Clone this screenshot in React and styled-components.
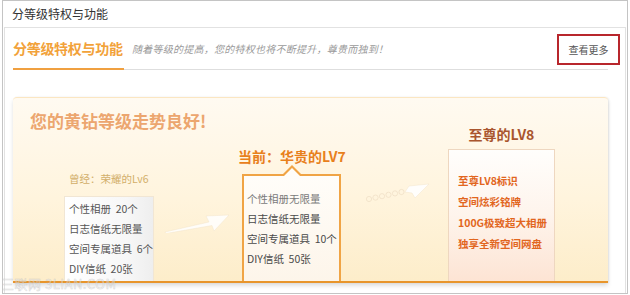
import React from "react";
import styled, { createGlobalStyle } from "styled-components";

const Global = createGlobalStyle`
  html, body { margin: 0; padding: 0; background: #fff; }
  body { font-family: "Noto Sans CJK SC", "Noto Sans", "Liberation Sans", sans-serif; }
  * { box-sizing: border-box; }
`;

const Frame = styled.div`
  position: relative;
  width: 626px;
  height: 294px;
  margin-left: 2px;
  border: 1px solid #c4c4c4;
  display: flex;
  flex-direction: column;
  overflow: hidden;
`;

const Header = styled.div`
  height: 26px;
  line-height: 25px;
  padding-left: 9px;
  font-size: 12px;
  color: #333;
`;

const Inner = styled.div`
  flex: 1;
  margin: 0 1px;
  border: 1px solid #e2e2e2;
  border-bottom: none;
`;

const TitleRow = styled.div`
  display: flex;
  align-items: flex-end;
  margin-left: 8px;
  width: 595px;
  height: 42px;
  border-bottom: 1px solid #dedede;
`;

const Title = styled.div`
  font-size: 14px;
  font-weight: 700;
  line-height: 20px;
  color: #f2a23a;
  padding-bottom: 10px;
  margin-bottom: -1px;
  border-bottom: 2px solid #f0a040;
  letter-spacing: -0.3px;
  width: 111px;
  white-space: nowrap;
`;

const Subtitle = styled.div`
  margin-left: 8px;
  margin-bottom: 13px;
  font-size: 10px;
  line-height: 14px;
  color: #9a9a9a;
  font-style: italic;
  letter-spacing: 0.25px;
  white-space: nowrap;
`;

const MoreButton = styled.a`
  align-self: flex-start;
  margin-top: 6px;
  margin-left: auto;
  margin-right: -12px;
  width: 63px;
  height: 31px;
  border: 2px solid #b8262c;
  display: flex;
  align-items: center;
  justify-content: center;
  font-size: 10px;
  color: #555;
  text-decoration: none;
`;

const Panel = styled.div`
  margin: 27px 0 0 8px;
  width: 595px;
  height: 186px;
  border-top: 1px solid #fbe6c2;
  border-bottom: 2px solid #e8952b;
  border-radius: 4px 4px 0 0;
  background: linear-gradient(180deg, #fffaf1 0%, #fff4dd 55%, #fdedca 100%);
  box-shadow: 1px 0 2px rgba(0, 0, 0, 0.08), 0 3px 4px rgba(0, 0, 0, 0.12);
  display: flex;
  flex-direction: column;
`;

const BigTitle = styled.div`
  padding: 12px 0 0 17px;
  font-size: 17px;
  font-weight: 700;
  line-height: 22px;
  color: #eca66f;
  white-space: nowrap;
`;

const Stage = styled.div`
  flex: 1 1 0;
  min-height: 0;
  display: flex;
  align-items: flex-end;
  padding-left: 51px;
`;

const Col = styled.div`
  display: flex;
  flex-direction: column;
  flex-shrink: 0;
  width: ${(p) => p.$w}px;
  margin-left: ${(p) => p.$ml || 0}px;
`;

const Label = styled.div`
  white-space: nowrap;
  font-size: ${(p) => p.$size}px;
  font-weight: ${(p) => (p.$bold ? 700 : 400)};
  line-height: ${(p) => p.$lh}px;
  color: ${(p) => p.$color};
  margin-bottom: ${(p) => p.$mb}px;
  margin-left: ${(p) => p.$ml || 0}px;
  text-align: ${(p) => p.$align || "left"};
`;

const OldBox = styled.div`
  width: 90px;
  height: 85px;
  padding: 2px 0 0 4px;
  background: linear-gradient(90deg, #ffffff 0%, #f7f7f7 70%, #eeeeee 100%);
  border: 1px solid #f1e6d4;
  border-bottom: none;
  font-size: 10.5px;
  line-height: 20px;
  color: #555;
  white-space: nowrap;
`;

const CurBox = styled.div`
  position: relative;
  width: 99px;
  height: 107px;
  padding: 13px 0 0 3px;
  border: 2px solid #f0a445;
  border-bottom: none;
  background: linear-gradient(180deg, #fffdf9 0%, #fdf5ea 100%);
  font-size: 10.5px;
  line-height: 20px;
  color: #4a4a4a;
  white-space: nowrap;

  &::before {
    content: "";
    position: absolute;
    left: 37px;
    top: -11px;
    border-left: 11px solid transparent;
    border-right: 11px solid transparent;
    border-bottom: 11px solid #f0a445;
  }
  &::after {
    content: "";
    position: absolute;
    left: 40px;
    top: -8px;
    border-left: 8px solid transparent;
    border-right: 8px solid transparent;
    border-bottom: 8px solid #fffdf9;
  }
`;

const Line = styled.div`
  color: ${(p) => p.$color || "inherit"};
`;

const TopBox = styled.div`
  width: 107px;
  height: 132px;
  padding: 20px 0 0 9px;
  border: 1px solid #eed7c0;
  border-bottom: none;
  background: linear-gradient(180deg, #fffefc 0%, #fef4ec 50%, #fde4d4 100%);
  font-size: 10.5px;
  font-weight: 700;
  line-height: 21px;
  color: #e2661e;
  white-space: nowrap;
`;

const ArrowSvg = styled.svg`
  flex-shrink: 0;
  display: block;
  margin-left: ${(p) => p.$ml}px;
  margin-bottom: ${(p) => p.$mb}px;
`;

const Watermark = styled.div`
  position: absolute;
  left: -2px;
  bottom: 2px;
  font-size: 13px;
  line-height: 14px;
  color: rgba(255, 255, 255, 0.4);
  -webkit-text-stroke: 0.5px rgba(175, 175, 175, 0.5);
  letter-spacing: 0.5px;
  white-space: nowrap;
  pointer-events: none;
`;

const SolidArrow = () => (
  <ArrowSvg $ml={9} $mb={48} width="67" height="20" viewBox="0 0 67 20">
    <path
      d="M2 19 L46 9 L43 3 L66 2 L51 18 L49 12.5 L3 20.5 Z"
      fill="rgba(255,255,255,0.85)"
      stroke="rgba(240,225,200,0.7)"
      strokeWidth="0.6"
    />
  </ArrowSvg>
);

const DottedArrow = () => {
  const dots = [0, 1, 2, 3, 4, 5];
  return (
    <ArrowSvg $ml={24} $mb={78} width="65" height="20" viewBox="0 0 65 20">
      {dots.map((i) => (
        <circle
          key={i}
          cx={4 + i * 6.5}
          cy={16 - i * 1.4}
          r="2.6"
          fill="none"
          stroke="rgba(238,222,196,0.9)"
          strokeWidth="0.8"
        />
      ))}
      <path
        d="M40 9 L44 3 L64 1 L50 15 L47 10 Z"
        fill="rgba(255,255,255,0.9)"
        stroke="rgba(240,225,200,0.7)"
        strokeWidth="0.6"
      />
    </ArrowSvg>
  );
};

export default function App() {
  return (
    <>
      <Global />
      <Frame>
        <Header>分等级特权与功能</Header>
        <Inner>
          <TitleRow>
            <Title>分等级特权与功能</Title>
            <Subtitle>随着等级的提高，您的特权也将不断提升，尊贵而独到！</Subtitle>
            <MoreButton href="#">查看更多</MoreButton>
          </TitleRow>
          <Panel>
            <BigTitle>您的黄钻等级走势良好!</BigTitle>
            <Stage>
              <Col $w={90}>
                <Label $size={10.5} $lh={14} $color="#d2af6a" $mb={10} $ml={5}>
                  曾经：荣耀的Lv6
                </Label>
                <OldBox>
                  <Line>个性相册&nbsp;&nbsp;20个</Line>
                  <Line>日志信纸无限量</Line>
                  <Line>空间专属道具&nbsp;&nbsp;6个</Line>
                  <Line>DIY信纸&nbsp;&nbsp;20张</Line>
                </OldBox>
              </Col>
              <SolidArrow />
              <Col $w={99} $ml={12}>
                <Label $size={14} $bold $lh={18} $color="#e8801c" $mb={9} $ml={-4}>
                  当前：华贵的LV7
                </Label>
                <CurBox>
                  <Line $color="#7a7a7a">个性相册无限量</Line>
                  <Line>日志信纸无限量</Line>
                  <Line>空间专属道具&nbsp;&nbsp;10个</Line>
                  <Line>DIY信纸&nbsp;&nbsp;50张</Line>
                </CurBox>
              </Col>
              <DottedArrow />
              <Col $w={107} $ml={18}>
                <Label $size={14} $bold $lh={18} $color="#a9552e" $mb={6} $align="center">
                  至尊的LV8
                </Label>
                <TopBox>
                  <Line>至尊LV8标识</Line>
                  <Line>空间炫彩铭牌</Line>
                  <Line>100G极致超大相册</Line>
                  <Line>独享全新空间网盘</Line>
                </TopBox>
              </Col>
            </Stage>
          </Panel>
        </Inner>
        <Watermark>三联网 3LIAN.COM</Watermark>
      </Frame>
    </>
  );
}
